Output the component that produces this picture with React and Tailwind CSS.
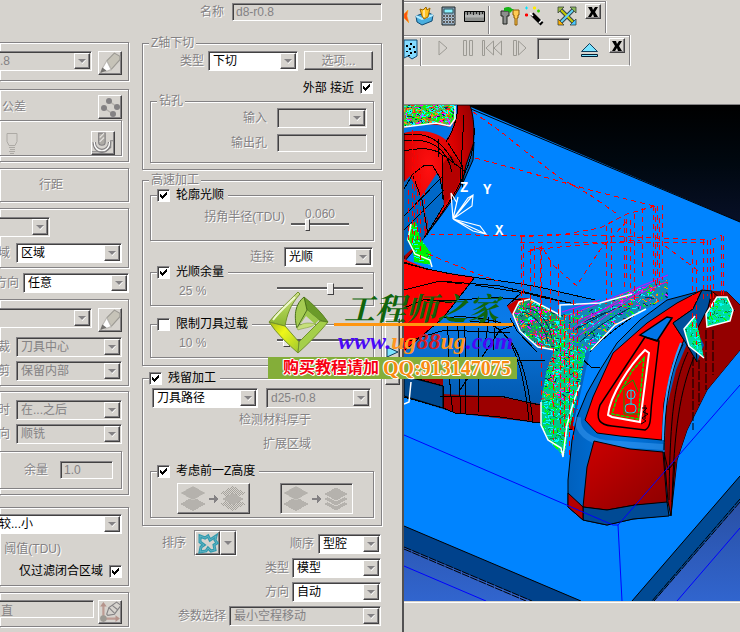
import React from 'react';
import clsx from 'clsx';

const LABEL = 'text-[#848284] [text-shadow:1px_1px_0_#fff] whitespace-nowrap';
const SUNKEN = 'border border-t-[#848284] border-l-[#848284] border-b-white border-r-white shadow-[inset_1px_1px_0_#424142]';
const RAISED = 'border border-t-white border-l-white border-b-[#424142] border-r-[#424142] shadow-[inset_-1px_-1px_0_#848284]';
const ETCHED = 'border border-[#848284] shadow-[1px_1px_0_#fff,inset_1px_1px_0_#fff]';

const Combo = ({ value, label, disabled, className }) => (
  <span className={clsx('grid h-5 shrink-0', SUNKEN, disabled ? 'bg-[#d6d3ce]' : 'bg-white', className)}>
    <select aria-label={label} disabled={disabled} defaultValue={value} className={clsx('col-start-1 row-start-1 w-full min-w-0 appearance-none bg-transparent pl-1 leading-4 outline-none', disabled ? 'text-[#848284] opacity-100' : 'text-black')}>
      <option>{value}</option>
    </select>
    <span className={clsx('pointer-events-none col-start-1 row-start-1 m-px flex w-4 items-center justify-center justify-self-end bg-[#d6d3ce]', RAISED)}>
      <svg width="8" height="5" viewBox="0 0 8 5"><path d="M1 1h7l-3.5 4z" fill="#fff" /><path d="M0 0h8L4 4z" fill="#848284" /></svg>
    </span>
  </span>
);

const TextBox = ({ value, label, className }) => (
  <input aria-label={label} disabled defaultValue={value} className={clsx('h-[18px] shrink-0 bg-[#d6d3ce] px-[3px] text-[#848284] leading-4', SUNKEN, className)} />
);

const Check = ({ checked, label }) => (
  <span className={clsx('grid h-[13px] w-[13px] shrink-0 bg-white', SUNKEN)}>
    <input type="checkbox" aria-label={label} defaultChecked={checked} className="peer col-start-1 row-start-1 h-[11px] w-[11px] appearance-none" />
    <svg className="pointer-events-none invisible col-start-1 row-start-1 peer-checked:visible" width="11" height="11" viewBox="0 0 11 11" shapeRendering="crispEdges"><path d="M2 4v3l2 2 5-5V1L4 6z" fill="#000" /></svg>
  </span>
);

const CheckLegend = ({ label, checked }) => (
  <legend className="ml-1.5 bg-[#d6d3ce] pr-1 leading-[14px]">
    <label className="flex items-center gap-1.5 text-black whitespace-nowrap"><Check checked={checked} label={label} />{label}</label>
  </legend>
);

const TextLegend = ({ children }) => (
  <legend className={clsx('ml-1.5 bg-[#d6d3ce] px-0.5 leading-[14px]', LABEL)}>{children}</legend>
);

const Slider = ({ value, label, className }) => (
  <input type="range" aria-label={label} defaultValue={value} className={clsx('h-3 appearance-none bg-transparent [&::-webkit-slider-runnable-track]:h-[3px] [&::-webkit-slider-runnable-track]:border-t-2 [&::-webkit-slider-runnable-track]:border-b [&::-webkit-slider-runnable-track]:border-t-[#5a595a] [&::-webkit-slider-runnable-track]:border-b-white [&::-webkit-slider-thumb]:-mt-[6px] [&::-webkit-slider-thumb]:h-3 [&::-webkit-slider-thumb]:appearance-none [&::-webkit-slider-thumb]:border [&::-webkit-slider-thumb]:border-t-white [&::-webkit-slider-thumb]:border-l-white [&::-webkit-slider-thumb]:border-r-[#424142] [&::-webkit-slider-thumb]:border-b-[#424142] [&::-webkit-slider-thumb]:bg-[#e7e5e2]', className)} />
);

const IconButton = ({ label, className, children }) => (
  <button type="button" aria-label={label} className={clsx('flex shrink-0 items-center justify-center', RAISED, className || 'h-6 w-6')}>{children}</button>
);

const LeftGroup = ({ className, children }) => (
  <div className={clsx('mr-px flex flex-col items-end border-l-0 pr-1.5', ETCHED, className)}>{children}</div>
);

const Pencil = () => (
  <svg width="22" height="22" viewBox="0 0 20 20">
    <path d="M7 8L14 1l5 3v3l-8 9z" fill="#c6c3b8" stroke="#9c9a94" />
    <path d="M7 8l-4 7 3 3 5-2z" fill="#fff" stroke="#bdbab5" />
    <path d="M3 14l-2 5 6-2z" fill="#73716e" />
  </svg>
);

const PointsIcon = () => (
  <svg width="22" height="22" viewBox="0 0 22 22">
    <path d="M10 5l8 6M5 12l9 6" stroke="#b5b2ad" strokeWidth="1.5" />
    <g fill="#848284"><circle cx="10" cy="5" r="3" /><circle cx="18" cy="11" r="3" /><circle cx="5" cy="12" r="3" /><circle cx="14" cy="18" r="3" /></g>
  </svg>
);

const GrooveIcon = () => (
  <svg width="22" height="22" viewBox="0 0 20 20" fill="none">
    <path d="M1 9c0 13 16 13 16 0M3 9c0 9 12 9 12 0" stroke="#848284" />
    <path d="M2 9c0 11 14 11 14 0" stroke="#fff" />
    <path d="M6 1h6v8c0 4-6 4-6 0z" fill="#adaaa5" stroke="#848284" />
    <path d="M7 5l4-4M7 9l4-4" stroke="#e7e5e2" />
    <path d="M0 18h12l5-4V8h3" stroke="#848284" />
  </svg>
);

const ToolTipIcon = () => (
  <svg width="12" height="22" viewBox="0 0 12 22" fill="none" stroke="#adaaa5">
    <path d="M1 1.5h10v8l-2 4H3l-2-4z" /><path d="M3 15.5h6M4 17.5h5M3 19.5h6M4 21.5h4" />
  </svg>
);

const AxisToolIcon = () => (
  <svg width="22" height="22" viewBox="0 0 20 20">
    <path d="M4 16V4M4 16h13" stroke="#bd9c94" strokeWidth="2" /><path d="M1 5l3-4 3 4zM15 13l4 3-4 3z" fill="#b5948c" />
    <circle cx="4" cy="16" r="3" fill="#9c9a94" />
    <path d="M7 12l2-6 7-5 4 3-6 8-6 1z" fill="#d6d3ce" stroke="#848284" /><path d="M9 6l5 5M12 4l5 4" stroke="#848284" />
  </svg>
);

const LayersIcon = ({ more }) => (
  <svg width="69" height="28" viewBox="0 0 69 28" shapeRendering="crispEdges">
    <defs><pattern id="dither" width="2" height="2" patternUnits="userSpaceOnUse"><rect width="1" height="1" fill="#a5a29c" /><rect x="1" y="1" width="1" height="1" fill="#a5a29c" /></pattern></defs>
    <g fill="#b5b2ad">
      <path d="M1 19l13-7 13 7-13 7z" />
      <path d="M1 8l13-7 13 7-13 7z" stroke="#d6d3ce" strokeWidth=".5" />
      {more
        ? [19, 14, 9].map(y => <path key={y} d={`M41 ${y}l13 -7 13 7 -13 7z`} stroke="#d6d3ce" />)
        : <><path d="M41 8l13-7 13 7-13 7z" fill="url(#dither)" /><path d="M41 19l13-7 13 7-13 7z" fill="url(#dither)" /><path d="M43 14l11-6 11 6-11 6z" /></>}
    </g>
    <path d="M30 13h5v-3l5 4-5 4v-3h-5z" fill="#848284" />
  </svg>
);

const LeftColumn = () => (
  <div className="flex w-[130px] shrink-0 flex-col overflow-hidden pt-[42px]">
    <LeftGroup className="pt-2 pb-[5px]">
      <div className="flex items-start gap-1.5"><Combo label="刀具" value=".8" disabled className="w-[97px]" /><IconButton label="编辑刀具"><Pencil /></IconButton></div>
    </LeftGroup>
    <LeftGroup className="mt-2 pt-[5px] pb-[5px]">
      <div className="flex w-full items-center pl-0.5"><span className={LABEL}>公差</span><span className="flex-1" /><IconButton label="公差点"><PointsIcon /></IconButton></div>
      <div className={clsx('mt-px flex w-full items-center justify-between border-l-0 pt-2.5 pr-1.5 pl-1.5', ETCHED)}><ToolTipIcon /><IconButton label="余量"><GrooveIcon /></IconButton></div>
    </LeftGroup>
    <LeftGroup className="mt-1.5 py-2"><span className={clsx('mr-[59px] leading-4', LABEL)}>行距</span></LeftGroup>
    <LeftGroup className="mt-1.5 gap-1.5 pt-2 pb-1">
      <Combo label="样式" value="" disabled className="mr-[72px] w-20" />
      <div className="flex items-center gap-1.5"><span className={LABEL}>域</span><Combo label="区域" value="区域" className="w-[106px]" /></div>
    </LeftGroup>
    <div className="mt-[5px] mr-px flex items-center justify-end gap-1"><span className={LABEL}>方向</span><Combo label="方向" value="任意" className="w-[106px]" /></div>
    <LeftGroup className="mt-1.5 gap-1 pt-2 pb-1">
      <div className="mb-px flex items-start gap-1.5"><Combo label="边界" value="" disabled className="w-28" /><IconButton label="编辑边界"><Pencil /></IconButton></div>
      <div className="flex items-center gap-1.5"><span className={LABEL}>裁</span><Combo label="裁" value="刀具中心" disabled className="w-[106px]" /></div>
      <div className="flex items-center gap-1.5"><span className={LABEL}>剪</span><Combo label="剪" value="保留内部" disabled className="w-[106px]" /></div>
    </LeftGroup>
    <LeftGroup className="mt-[5px] gap-1 pt-2 pb-[5px]">
      <div className="flex items-center gap-1.5"><span className={LABEL}>时</span><Combo label="时" value="在...之后" disabled className="w-[106px]" /></div>
      <div className="flex items-center gap-1.5"><span className={LABEL}>向</span><Combo label="切削方向" value="顺铣" disabled className="w-[106px]" /></div>
      <div className={clsx('mt-[3px] flex w-full items-center justify-end gap-3 border-l-0 py-[9px] pr-2', ETCHED)}><span className={LABEL}>余量</span><TextBox label="余量" value="1.0" className="w-[53px]" /></div>
    </LeftGroup>
    <LeftGroup className="mt-3 pt-1.5 pb-1.5">
      <Combo label="过滤" value="较...小" className="w-32" />
      <span className={clsx('mt-[7px] mr-[61px] leading-4', LABEL)}>阈值(TDU)</span>
      <label className="mt-1.5 flex items-center gap-1.5 leading-4 text-black whitespace-nowrap">仅过滤闭合区域<Check checked label="仅过滤闭合区域" /></label>
    </LeftGroup>
    <LeftGroup className="mt-1.5 pt-[7px] pb-0.5">
      <div className="flex items-start gap-1"><TextBox label="刀轴" value="直" className="w-[97px]" /><IconButton label="刀轴"><AxisToolIcon /></IconButton></div>
    </LeftGroup>
  </div>
);

const MainColumn = () => (
  <div className="flex w-60 shrink-0 flex-col pt-[3px]">
    <div className="flex items-center justify-end gap-2"><span className={LABEL}>名称</span><TextBox label="名称" value="d8-r0.8" className="w-[150px]" /></div>

    <fieldset className={clsx('mt-[15px] pb-1.5', ETCHED)}>
      <TextLegend>Z轴下切</TextLegend>
      <div className="mt-px mr-2 flex items-start justify-end">
        <span className={clsx('mr-1 leading-5', LABEL)}>类型</span>
        <Combo label="类型" value="下切" className="mr-1.5 w-[90px]" />
        <button type="button" className={clsx('h-[19px] w-[69px] leading-4', RAISED, LABEL)}>选项...</button>
      </div>
      <label className="mt-2.5 mr-2 flex h-[13px] items-center justify-end gap-1.5 text-black">外部 接近<Check checked label="外部 接近" /></label>
      <fieldset className={clsx('mx-[7px] pr-1.5 pb-2.5', ETCHED)}>
        <TextLegend>钻孔</TextLegend>
        <div className="flex flex-col gap-1.5">
          <div className="flex items-center justify-end gap-2.5"><span className={LABEL}>输入</span><Combo label="输入" value="" disabled className="w-[90px]" /></div>
          <div className="flex items-center justify-end gap-2.5"><span className={LABEL}>输出孔</span><TextBox label="输出孔" value="" className="w-[90px]" /></div>
        </div>
      </fieldset>
    </fieldset>

    <fieldset className={clsx('mt-[3px] pb-[7px]', ETCHED)}>
      <TextLegend>高速加工</TextLegend>
      <fieldset className={clsx('mx-[7px] mt-px py-[5px]', ETCHED)}>
        <CheckLegend label="轮廓光顺" checked />
        <div className="mr-6 flex h-7 justify-end gap-1.5">
          <span className={clsx('leading-5', LABEL)}>拐角半径(TDU)</span>
          <div className="-mt-px flex w-[58px] flex-col items-center"><span className={clsx('leading-4', LABEL)}>0.060</span><Slider label="拐角半径" value={26} className="-mt-1 w-full [&::-webkit-slider-thumb]:w-[5px]" /></div>
        </div>
      </fieldset>
      <div className="mt-1.5 mr-2 flex items-center justify-end gap-2.5"><span className={LABEL}>连接</span><Combo label="连接" value="光顺" className="w-[89px]" /></div>
      <fieldset className={clsx('mx-[7px] -mt-0.5 pt-1 pb-1.5', ETCHED)}>
        <CheckLegend label="光顺余量" checked />
        <div className="mr-2.5 ml-7 flex h-4 items-center justify-between"><span className={LABEL}>25 %</span><Slider label="光顺余量" value={63} className="-mt-1.5 w-[86px] [&::-webkit-slider-thumb]:w-[7px]" /></div>
      </fieldset>
      <fieldset className={clsx('mx-[7px] mt-[11px] pt-1 pb-1.5', ETCHED)}>
        <CheckLegend label="限制刀具过载" />
        <div className="mr-2.5 ml-7 flex h-4 items-center justify-between"><span className={LABEL}>10 %</span><Slider label="限制刀具过载" value={8} className="-mt-1.5 w-[86px] [&::-webkit-slider-thumb]:w-[7px]" /></div>
      </fieldset>
    </fieldset>

    <fieldset className={clsx('mt-[5px] pb-[7px]', ETCHED)}>
      <CheckLegend label="残留加工" checked />
      <div className="mt-[3px] mr-2.5 flex justify-end gap-2"><Combo label="残留类型" value="刀具路径" className="w-[106px]" /><Combo label="参考" value="d25-r0.8" disabled className="w-[105px]" /></div>
      <div className="mt-1 mr-[70px] flex flex-col items-end gap-2"><span className={clsx('leading-4', LABEL)}>检测材料厚于</span><span className={clsx('leading-4', LABEL)}>扩展区域</span></div>
      <fieldset className={clsx('mx-[7px] mt-3 pb-[3px]', ETCHED)}>
        <CheckLegend label="考虑前一Z高度" checked />
        <div className="mt-[5px] mr-5 ml-[26px] flex justify-between">
          <IconButton label="单层" className="h-[31px] w-[73px]"><LayersIcon /></IconButton>
          <button type="button" aria-label="多层" className={clsx('flex h-[31px] w-[73px] items-center justify-center', SUNKEN)}><LayersIcon more /></button>
        </div>
      </fieldset>
    </fieldset>

    <div className="mt-1 mr-px ml-5 flex items-start justify-between">
      <div className="flex items-center gap-2">
        <span className={LABEL}>排序</span>
        <button type="button" aria-label="排序" className={clsx('flex h-[26px] w-[43px]', SUNKEN)}>
          <span className={clsx('flex h-6 w-[25px] items-center justify-center', RAISED)}>
            <svg width="22" height="21" viewBox="0 0 22 21" fill="none"><path d="M3 3l5 2 3-2 2 4 6-4-1 4 2 3-3 2 1 5-4 1-3-3-2 3-6 1 1-5 3-2-4-3z" stroke="#319aad" strokeWidth="3" /><path d="M3 3l5 2 3-2 2 4 6-4-1 4 2 3-3 2 1 5-4 1-3-3-2 3-6 1 1-5 3-2-4-3z" stroke="#84c7d6" strokeWidth=".5" /></svg>
          </span>
          <span className={clsx('flex h-6 w-4 items-center justify-center', RAISED)}><svg width="8" height="5" viewBox="0 0 8 5"><path d="M0 0h8L4 4z" fill="#848284" /></svg></span>
        </button>
      </div>
      <div className="flex flex-col items-end gap-1 pt-1">
        <div className="flex items-center gap-1"><span className={LABEL}>顺序</span><Combo label="顺序" value="型腔" className="w-[63px]" /></div>
        <div className="flex items-center gap-[3px]"><span className={LABEL}>类型</span><Combo label="类型" value="模型" className="w-[89px]" /></div>
        <div className="flex items-center gap-[3px]"><span className={LABEL}>方向</span><Combo label="方向" value="自动" className="w-[89px]" /></div>
      </div>
    </div>
    <div className="mt-1 mr-px flex items-center justify-end gap-[3px]"><span className={LABEL}>参数选择</span><Combo label="参数选择" value="最小空程移动" disabled className="w-[152px]" /></div>
  </div>
);

// Toolbars

const CloseButton = () => (
  <IconButton label="关闭" className="h-[15px] w-4"><svg width="10" height="10" viewBox="0 0 10 10"><path d="M0 0h4l1 3 2-3h3L7 5l3 5H6L5 7l-2 3H0l3-5z" /></svg></IconButton>
);

const Separator = () => <span className="h-7 w-0.5 border-r border-l border-l-[#848284] border-r-white" />;

const Tool = ({ label, children }) => <button type="button" aria-label={label} className="shrink-0">{children}</button>;

const Toolbars = () => (
  <div className="flex h-[105px] shrink-0 flex-col items-start gap-0.5 border-b border-[#848284] pt-px">
    <div className="flex h-8 w-[202px] items-start border-t border-r border-t-[#848284] border-r-[#848284] shadow-[1px_0_0_#fff,inset_0_1px_0_#fff] pt-1">
      <svg width="5" height="20" viewBox="0 0 5 20"><path d="M0 8l4-4-1 6 2 7-5-5z" fill="#ff5110" stroke="#ffb200" strokeWidth=".5" /></svg>
      <span className="w-1.5" />
      <Tool label="工具">
        <svg width="20" height="20" viewBox="0 0 20 20"><path d="M1 10l11-4 6 3-1 6-10 4-5-3z" fill="#4aaede" stroke="#104a73" /><path d="M1 10l6 3 11-4" fill="none" stroke="#b5ebff" strokeWidth="2" /><path d="M7 10L5 3l3 1 3-3 1 3 3-2-2 9-4 2z" fill="#ffc321" stroke="#9c6500" /><path d="M9 4v7" stroke="#fff" /></svg>
      </Tool>
      <span className="w-1.5" />
      <Tool label="计算器">
        <svg width="15" height="20" viewBox="0 0 15 20"><path d="M1 1h13v18H1z" fill="#849eb5" stroke="#212829" /><path d="M3 3h9v4H3z" fill="#8cf3ff" stroke="#31555a" />{[9, 12, 15].map(y => [3, 6, 9, 12].map(x => <path key={`${x}-${y}`} d={`M${x - 1} ${y}h2v2h-2z`} fill="#000" stroke="#fff" strokeWidth=".4" />))}</svg>
      </Tool>
      <span className="w-2" />
      <Tool label="测量">
        <svg width="21" height="20" viewBox="0 0 21 20"><path d="M.5 5.5h20v10H.5z" fill="#8c8e8c" stroke="#000" /><path d="M1 10h19" stroke="#b5b6b5" strokeWidth="3" /><path d="M3.5 6v3M6.5 6v2M9.5 6v3M12.5 6v2M15.5 6v3M18.5 6v2" stroke="#212021" /></svg>
      </Tool>
      <span className="w-[3px]" /><Separator /><span className="w-2.5" />
      <Tool label="刀具库">
        <svg width="20" height="20" viewBox="0 0 20 20"><path d="M1 5h8v5H7v8H3v-8H1z" fill="#8c8e8c" stroke="#212421" /><path d="M13 4h6v5h-1v3h-1v7h-2v-7h-1V9h-1z" fill="#ffcb52" stroke="#8c5900" /><path d="M4 2c4-2 7-1 8 1h2l-4 4-2-2H4z" fill="#18b218" /></svg>
      </Tool>
      <span className="w-[5px]" />
      <Tool label="向导">
        <svg width="20" height="20" viewBox="0 0 20 20"><path d="M7 8l10 10" stroke="#000" strokeWidth="4" /><path d="M5 7l3 3M14 17l3-3" stroke="#fff" strokeWidth="1.5" /><path d="M0 2h3M1.5.5v3" stroke="#00e3ff" /><path d="M8 2h3M9.5.5v3" stroke="#ffeb00" strokeWidth="2" /><path d="M12 5h3M13.5 3.5v3" stroke="#39cf00" strokeWidth="1.5" /><path d="M0 9h3M1.5 7.5v3" stroke="red" strokeWidth="2" /></svg>
      </Tool>
      <span className="w-3" />
      <Tool label="缩放">
        <svg width="20" height="20" viewBox="0 0 20 20"><path d="M4 4l12 12M16 4L4 16" stroke="#31454a" strokeWidth="4" /><path d="M4 4l12 12" stroke="#c6cb00" strokeWidth="2" /><path d="M16 4L4 16" stroke="#63d3f7" strokeWidth="2" /><g stroke="#39453a" strokeWidth=".8"><path d="M1 1h6L1 7z" fill="#9cba42" /><path d="M19 1v6l-6-6z" fill="#8cba5a" /><path d="M1 19v-6l6 6z" fill="#ffae00" /><path d="M19 19h-6l6-6z" fill="#4ac7ff" /></g></svg>
      </Tool>
      <span className="w-2" />
      <span className="-mt-0.5"><CloseButton /></span>
    </div>
    <div className="flex h-[31px] w-[226px] items-start border border-l-0 border-[#848284] border-b-white shadow-[1px_0_0_#fff,inset_0_1px_0_#fff] pt-0.5">
      <Tool label="仿真"><svg width="14" height="22" viewBox="0 0 14 22"><path d="M0 2h13v16l-5 3-4-3-4 2z" fill="#84dbff" stroke="#104a73" /><path d="M2 7h2v2H2zM6 5h2v2H6zM9 8h2v2H9zM5 10h2v2H5zM2 13h2v1H2zM6 14h2v2H6zM10 13h2v2h-2zM4 17h2v1H4z" /></svg></Tool>
      <span className="w-0.5" /><Separator /><span className="w-4" />
      <div className="flex items-center text-[#9c9a94]">
        <Tool label="播放"><svg width="10" height="20" viewBox="0 0 10 20"><path d="M1 3l8 7-8 7z" fill="none" stroke="currentColor" /></svg></Tool>
        <span className="w-3.5" />
        <Tool label="暂停"><svg width="12" height="20" viewBox="0 0 12 20"><path d="M1.5 2.5h3v15h-3zM7.5 2.5h3v15h-3z" fill="none" stroke="currentColor" /></svg></Tool>
        <span className="w-2" />
        <Tool label="后退"><svg width="21" height="20" viewBox="0 0 21 20"><path d="M.5 2.5h2v15h-2zM11.5 3v14L4 10zM19.5 3v14L12 10z" fill="none" stroke="currentColor" /></svg></Tool>
        <span className="w-2.5" />
        <Tool label="步进"><svg width="14" height="20" viewBox="0 0 14 20"><path d="M.5 2.5h3v15h-3zM5.5 3v14l7.5-7z" fill="none" stroke="currentColor" /></svg></Tool>
      </div>
      <span className="w-2.5" />
      <input aria-label="步" disabled className={clsx('h-[22px] w-[33px] bg-[#d6d3ce]', SUNKEN)} />
      <span className="w-2.5" />
      <Tool label="弹出"><svg width="19" height="22" viewBox="0 0 19 22"><path d="M1.5 13.5l8-8 8 8z" fill="#7be3ff" stroke="#103c5a" /><path d="M1.5 16.5h16v2h-16z" fill="#7be3ff" stroke="#001c31" /></svg></Tool>
      <span className="w-2.5" />
      <CloseButton />
    </div>
  </div>
);

// Model view

const PATCHES = [
  { id: 'p0', box: [404, 105, 52, 23], n: 500, d: 'M404 105H455V118L450 125L436 123L404 127z', base: '#5ab642' },
  { id: 'p1', box: [404, 222, 30, 44], n: 160, d: 'M410 224L416 222L420 238L431 253L431 265L414 262L413 250L407 240z', base: '#00f000' },
  { id: 'p2', box: [512, 298, 54, 53], n: 560, d: 'M513 314L519 302L530 299L560 315L564 345L555 350L538 347L520 331z', base: '#1c8f76' },
  { id: 'p3', box: [540, 312, 52, 146], n: 1300, d: 'M560 315L590 310L586 350L580 385L567 440L564 457L548 440L541 425L541 402L546 372L554 350z', base: '#00c98c' },
  { id: 'p4', box: [560, 275, 110, 78], n: 950, d: 'M560 318L600 303L630 291L668 279L668 298L646 309L615 325L591 350L579 355z', base: '#1488b8' },
  { id: 'p5', box: [704, 294, 32, 34], n: 130, d: 'M706 314L717 297L727 297L733 310L730 321L707 327z', base: '#00dba5' },
  { id: 'p6', box: [683, 314, 22, 46], n: 110, d: 'M684 329L695 316L699 332L704 358L689 346z', base: '#00dba5' },
];

const SPARKS = ['#00ff00', '#00ffff', '#00ff00', '#00f7ff', '#ff8a10', '#ff00ff', '#ff2020', '#003c60'];
const COOL_SPARKS = ['#00ff00', '#00ffff', '#00ff00', '#00f7ff', '#008c4a'];

const sparks = (patch, seed) => {
  let s = seed * 7919 + 13;
  const rnd = () => {
    s = (s * 16807) % 2147483647;
    return s / 2147483647;
  };
  const [x, y, w, h] = patch.box;
  return Array.from({ length: patch.n }, () => {
    const px = Math.round(x + rnd() * w);
    const py = Math.round(y + rnd() * h);
    const colors = py > 400 || px > 680 || patch.id === 'p1' ? COOL_SPARKS : SPARKS;
    return { d: `M${px} ${py}l${Math.round(rnd() * 8 - 3)} ${Math.round(rnd() * 6 - 3)}`, color: colors[Math.floor(rnd() * colors.length)] };
  });
};

const RAPIDS = [
  'M473 112L500 131L530 155L560 178L590 195L620 216', 'M475 158L520 170L590 190L654 206', 'M430 234L520 236L560 235L600 228L627 214L655 206',
  'M520 237L560 234L705 240', 'M520 242H705', 'M521 237V300M523 244V310', 'M530 250V312M534 246V290', 'M540 250V320M541 246V400', 'M550 262V320M558 264V320',
  'M564 315V440M569 315V455M560 320V430', 'M579 282L600 250L629 219', 'M606 226V300M611 228V295', 'M624 219V290M626 219V280M630 220V288', 'M634 214V300M642 208V280',
  'M653 206V282M655 208V285M657 206V283M659 218V285', 'M662 205V280M665 246L700 272', 'M692 250V330M696 260V345', 'M703 240V300M707 240V296', 'M710 240V316M713 248V310', 'M721 236V300M723 236V300', 'M712 240L722 235',
  'M530 250L580 245L640 240', 'M528 252L542 247L553 265L578 287', 'M428 254L480 275L498 281', 'M412 130V245M414 150V235M420 165V260', 'M408 190V240M417 155V240M424 190V235', 'M573 300V440M577 310V410M553 330V440',
];

const EDGES = [
  // upper body
  'M404 135C425 131 443 140 455 165M404 141C430 137 447 148 452 172M404 151C425 146 438 150 443 156L442 200', 'M404 189L413 174L425 165L433 166L440 178L444 200', 'M404 216L442 177M404 230L444 190M425 237L444 205',
  'M443 155L466 172M438 139V157M413 176L422 200L428 235', 'M458 105C457 122 452 132 446 142M464 115C463 130 462 150 460 185', 'M474 128C476 160 460 190 424 238', 'M404 263L430 270M448 143L462 165L462 188',
  // middle body
  'M404 262C455 280 510 278 560 292L595 300', 'M475 277L443 318L405 350', 'M475 285L525 293L580 305', 'M440 281L500 286L550 298', 'M404 290L440 281L462 284', 'M404 308L425 299L452 303', 'M443 318C465 315 490 318 512 327',
  'M447 323C450 345 447 375 453 412M457 323C462 350 458 385 461 413', 'M464 326C468 355 464 385 466 413M478 328V412', 'M425 360H545', 'M470 322C500 320 520 335 529 420', 'M480 320C510 330 525 350 533 423',
  'M440 396H500L540 405', 'M404 397L443 408L455 413L500 417L540 423L572 430', 'M427 300C460 304 500 290 540 305', 'M404 375L443 386V408', 'M460 390L500 330L512 326', 'M405 342L445 330L510 333', 'M489 317L485 345M496 317L493 350', 'M507 306L522 292L545 298L575 304', 'M510 318L517 331L537 352', 'M578 355L592 368L600 367', 'M581 362L572 380L569 420', 'M590 352C605 335 625 322 647 307',
];

const Arrow = ({ d }) => <path d={d} fill="none" stroke="#fff" strokeWidth="1.2" />;

const ModelView = () => (
  <svg className="min-h-0 w-full flex-1 bg-black" viewBox="404 105 336 496" preserveAspectRatio="xMinYMin slice" role="img" aria-label="模型">
    <defs>
      <linearGradient id="sky" x1="0" y1="0" x2="0" y2="1"><stop offset="0" stopColor="#000" /><stop offset=".12" stopColor="#000810" /><stop offset=".24" stopColor="#081028" /><stop offset=".8" stopColor="#2950a5" /><stop offset="1" stopColor="#3165ce" /></linearGradient>
      <linearGradient id="steel" x1="0" y1="0" x2="0" y2="1"><stop offset="0" stopColor="#0075e7" /><stop offset=".35" stopColor="#0a7ae8" /><stop offset="1" stopColor="#004f9c" /></linearGradient>
      <linearGradient id="foot" x1="0" y1="0" x2="1" y2="0"><stop offset="0" stopColor="#0060bd" /><stop offset=".3" stopColor="#0075e0" /><stop offset="1" stopColor="#004a94" /></linearGradient>
      <radialGradient id="dome" cx=".35" cy=".4" r=".7"><stop offset="0" stopColor="#ff1010" /><stop offset=".6" stopColor="#d60000" /><stop offset="1" stopColor="#9c0000" /></radialGradient>
      <linearGradient id="front" x1="0" y1="0" x2="1" y2="1"><stop offset="0" stopColor="#ce0000" /><stop offset=".6" stopColor="#a50000" /><stop offset="1" stopColor="#8c0000" /></linearGradient>
      {PATCHES.map(p => <clipPath key={p.id} id={p.id}><path d={p.d} /></clipPath>)}
    </defs>
    <path d="M404 105H740V601H404z" fill="url(#sky)" />
    <path d="M404 105H466L740 222V476L632 601H581L404 526z" fill="#0084ff" />
    <path d="M404 526L581 601H532L404 547z" fill="#00428c" />
    <path d="M740 476L632 601H654L740 501z" fill="#004a94" />
    <path d="M471 109L740 222M404 526L581 601M740 476L632 601" stroke="#000" fill="none" />
    <path d="M404 547L532 601M404 549L526 601M740 499L652 601M740 502L654 601" stroke="#000" strokeDasharray="8 1" fill="none" />
    <path d="M404 566L486 601M740 528L677 601" stroke="#0000ff" fill="none" />

    <g strokeWidth="1">
      <path d="M404 105H470C476 122 475 150 468 170C458 195 440 217 424 238L404 262z" fill="url(#dome)" stroke="#000" />
      <path d="M404 128C420 123 438 124 450 127L456 119L458 105H455L454 105C455 127 452 132 446 140C435 131 420 129 404 133z" fill="#0075e7" />
      <path d="M404 182L410 176L422 200L427 219L424 238L404 256z" fill="#0063bd" />
      <path d="M421 197L437 173L443 186L444 205L426 238L428 222z" fill="#0068c8" />
      <path d="M474 142L473 160L462 185L466 165z" fill="#005aad" stroke="#000" />
      <path d="M444 205L458 186L462 165L450 154L442 165z" fill="#b50000" />
      <path d="M404 259L430 270L475 277L560 291L604 303L590 352L572 430L540 423L455 413L404 397z" fill="url(#steel)" />
      <path d="M404 259L430 270L475 277L443 318L404 352z" fill="#ff0000" />
      <path d="M404 368L443 377V386L404 376zM443 394L500 397L540 404L573 417V430L540 423L455 413L443 408z" fill="#9c0000" />
      <path d="M404 376L443 386V408L404 396z" fill="#00488c" stroke="#000" />
      <path d="M507 306L519 298L530 298L556 313L548 330L520 328z" fill="#c60000" />
      <path d="M568 480L572 440L577 417L587 393L600 370L617 343L640 320L667 300L697 292L727 292L740 305V350L707 390L687 430L677 460L671 515L633 519L607 525L583 520L568 507z" fill="url(#foot)" stroke="#000" />
      <path d="M585 420L593 397L613 353L647 323L677 303L702 290L693 309L673 323L684 340L673 363L664 403L662 440L620 436L597 433z" fill="#ff0000" stroke="#000" />
      <path d="M702 290L727 292L740 305V350L707 390L687 430L677 460L671 510L664 470L666 410L676 370L687 344L697 362L704 345L694 325z" fill="#940000" />
      <path d="M702 290L712 291L708 308L695 333L697 362L684 340L673 323L693 309z" fill="#004f9c" stroke="#000" />
      <path d="M640 335L667 317L672 318L657 341L648 338z" fill="#0075e7" stroke="#000" strokeWidth="1.5" />
      <path d="M578 417C576 432 590 441 605 443L663 447" stroke="#4aaaff" strokeWidth="6" fill="none" opacity=".4" />
      <path d="M594 441L630 449L663 452L667 503L635 505L607 510L583 507L587 467z" fill="url(#front)" stroke="#000" />
      <path d="M583 507L607 510L635 505L667 502L669 516L633 519L607 525L583 520z" fill="#004a94" stroke="#000" />
      <path d="M568 493L583 507V520L568 507z" fill="#b50000" stroke="#000" />
      <path d="M664 452L668 502L671 516L675 462L668 470z" fill="#a50000" stroke="#000" />
      <path d="M683 344C668 375 665 410 664 450M688 352C675 380 670 410 669 500M694 357C680 390 674 430 672 502" fill="none" stroke="#000" />
      <path d="M681 343C668 375 663 405 663 440" fill="none" stroke="#31a2ff" strokeWidth="2" />
      <path d="M693 357V430M706 330V390M713 330V375M699 360V405M713 292L735 311" stroke="#000" fill="none" strokeDasharray="9 2" />
    </g>

    <path d={EDGES.join('')} fill="none" stroke="#000" strokeWidth="1" shapeRendering="crispEdges" />
    <path d="M645 337L600 405C595 420 600 425 612 426L645 430C652 427 650 415 652 400L659 341z" fill="none" stroke="#000" strokeWidth="1.5" />
    <path d="M645 350L649 353L640 422L612 417L608 415C610 395 630 365 645 350z" fill="none" stroke="#fff" strokeWidth="2" />
    <path d="M644 358L638 419L612 414L617 398L632 371z" fill="none" stroke="#00e300" strokeWidth="1.5" strokeDasharray="4 1" />
    <g fill="none" stroke="#00e3f7"><rect x="627" y="390" width="8" height="9" rx="4" /><rect x="625" y="404" width="11" height="9" rx="4" /><path d="M631 390V405" /></g>
    <path d="M622 388L633 380L638 392M624 390V414H640" fill="none" stroke="#00a500" />
    <path d="M642 408h5l-4 4 5 2-6 4 4 3-5 3M645 405v14" fill="none" stroke="#000" />

    {PATCHES.map((p, i) => (
      <g key={p.id} clipPath={`url(#${p.id})`} shapeRendering="crispEdges">
        <path d={p.d} fill={p.base} />
        {sparks(p, i + 1).map((s, k) => <path key={k} d={s.d} stroke={s.color} />)}
      </g>
    ))}
    <path d="M526 308C540 310 548 322 552 338M522 312C535 314 545 328 548 342M575 330C590 322 605 312 622 306M580 342C595 328 610 318 630 308M584 322L606 312" stroke="#003c60" fill="none" shapeRendering="crispEdges" />
    <path d="M568 316L668 275M575 322L666 282M570 330L640 287M566 345L650 284M562 312L600 300" stroke="#e700e7" fill="none" />
    <path d="M404 127L436 123L450 126L455 119V106M411 224L408 240L415 254L430 260L432 267M520 331L513 314L519 302L530 299L558 314M520 331L538 347L555 350M541 402V425L548 440L561 448L563 457L567 425L574 400L580 385M560 317V305L600 303L632 294M591 350L615 325L646 309M706 314L717 297L727 297L733 310L730 321L707 327zM695 316L684 329L689 346L704 358M404 404L409 402L411 382" fill="none" stroke="#fff" strokeWidth="1.5" />
    <path d={RAPIDS.join('')} fill="none" stroke="#ff0000" strokeDasharray="5 4" shapeRendering="crispEdges" />
    <path d="M404 435L613 525H618L740 385M618 525L622 601" stroke="#0000ff" fill="none" />

    <Arrow d="M453 219L451 193L457 203M453 219L458 197M453 219L468 198L473 195L472 206L453 219L473 195M453 219L480 226L486 234L473 231L453 219L486 234" />
    <g fill="#fff" fontFamily="Liberation Mono" fontSize="14" fontWeight="bold"><text x="460" y="192">Z</text><text x="483" y="194">Y</text><text x="495" y="235">X</text></g>
  </svg>
);

const LogoMark = () => (
  <svg width="62" height="64" viewBox="0 0 62 64">
    <defs>
      <linearGradient id="leaf" x1="0" y1="0" x2="0" y2="1"><stop offset="0" stopColor="#cfe08a" /><stop offset=".6" stopColor="#a5cb4a" /><stop offset="1" stopColor="#8cb631" /></linearGradient>
      <linearGradient id="lime" x1="0" y1="0" x2="1" y2="1"><stop offset="0" stopColor="#a5ba18" /><stop offset=".4" stopColor="#eff718" /><stop offset="1" stopColor="#9cc731" /></linearGradient>
    </defs>
    <path d="M30 1C20 11 9 21 1 31L17 35C19 24 22 14 32 3z" fill="url(#leaf)" stroke="#73922d" />
    <path d="M1 31L17 35L31 51L30 62C20 53 9 43 1 31z" fill="url(#lime)" stroke="#73922d" />
    <path d="M30 62L31 51L52 30L60 31C51 42 41 52 30 62z" fill="#a5cf4a" stroke="#73922d" />
    <path d="M36 6C45 13 53 21 60 31L51 29L39 19z" fill="#6b9a29" stroke="#5a8221" />
    <path d="M39 19L51 29L47 33L38 25L31 35z" fill="#9cc74a" />
    <path d="M36 6L39 19L29 37C27 31 27 23 28 19C29 14 32 9 36 6z" fill="#a5cb52" stroke="#4a7118" />
    <path d="M29 37C33 32 39 31 48 33C42 37 35 37 30 39z" fill="#c6df7b" stroke="#73922d" strokeWidth=".5" />
    <path d="M27 6C19 14 10 22 5 29" stroke="#eff7ce" strokeWidth="2" fill="none" />
  </svg>
);

const OUTLINE = '[text-shadow:1px_0_0_#fff,-1px_0_0_#fff,0_1px_0_#fff,0_-1px_0_#fff,1px_1px_0_#fff,-1px_-1px_0_#fff]';

const Watermark = () => (
  <div className="pointer-events-none absolute top-[291px] left-[268px] w-[249px]">
    <div className="flex h-[66px] gap-1">
      <LogoMark />
      <div className="flex flex-col">
        <span className="pl-2.5 font-['Noto_Serif_CJK_SC','Noto_Sans_CJK_SC',serif] text-[31px] leading-8 font-bold text-[#10650c] italic whitespace-nowrap">工程师之家</span>
        <span className="h-[3px] w-[179px] bg-[#ff9610]" />
        <span className="pl-1 font-['Liberation_Serif',serif] text-2xl leading-[30px] font-bold text-[#4a08f7] italic">www.<span className="text-[#ff9621]">ug</span><span className="text-[#d61c21]">88</span><span className="text-[#ff9621]">ug</span>.com</span>
      </div>
    </div>
    <div className="flex h-[22px] items-center gap-1 bg-[#84ae39] pl-[15px] whitespace-nowrap">
      <span className={clsx('text-base leading-5 font-bold text-[#f70010]', OUTLINE)}>购买教程请加</span>
      <span className={clsx("font-['Liberation_Serif',serif] text-xl leading-5 font-bold text-[#f78a10]", OUTLINE)}>QQ:913147075</span>
    </div>
  </div>
);

const App = () => (
  <div className="relative flex min-h-screen overflow-hidden bg-[#d6d3ce] font-['Liberation_Sans','Noto_Sans_CJK_SC',sans-serif] text-xs leading-4">
    <div className="flex shrink-0 border-r-2 border-[#525152]">
      <LeftColumn />
      <span className="w-3" />
      <MainColumn />
      <div className="flex w-5 flex-col items-center pt-[318px]">
        <div className={clsx('flex h-[67px] w-[15px] flex-col items-center justify-end pb-1', RAISED)}>
          <svg width="13" height="40" viewBox="0 0 13 40"><path d="M1 7l11 5-11 5z" fill="#7be3ff" stroke="#103c5a" /><path d="M1 37h11" stroke="#000" strokeWidth="3" /></svg>
        </div>
      </div>
    </div>
    <div className="flex min-w-0 flex-1 flex-col">
      <Toolbars />
      <ModelView />
      <div className="mt-px h-[30px] shrink-0 border-t border-white" />
    </div>
    <Watermark />
  </div>
);

export default App;
